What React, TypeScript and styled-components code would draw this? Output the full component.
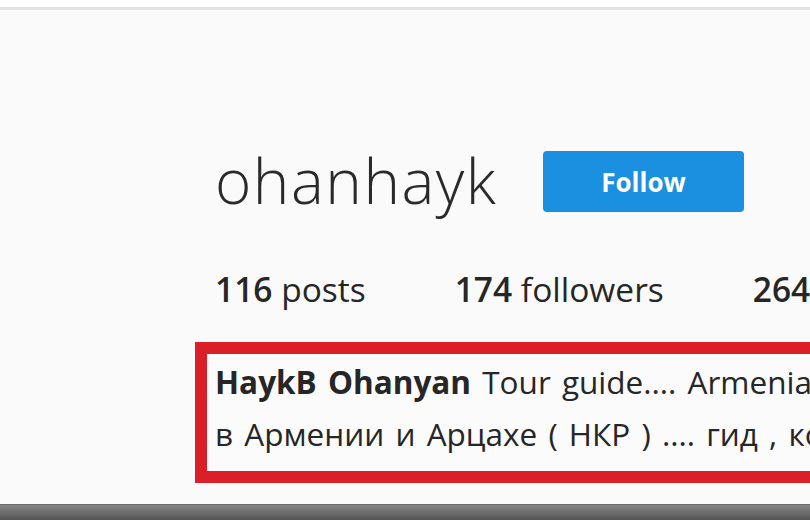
import styled, { createGlobalStyle } from 'styled-components'

const GlobalStyle = createGlobalStyle`
  html, body {
    margin: 0;
    padding: 0;
    background: #fafafa;
  }
  body {
    font-family: 'Open Sans', 'Noto Sans', 'Liberation Sans', sans-serif;
    color: #262626;
  }
`

const Page = styled.div`
  width: 810px;
  height: 520px;
  overflow: hidden;
  display: flex;
  flex-direction: column;
  background: #fafafa;
`

const TopStrip = styled.div`
  height: 7px;
  background: #ffffff;
  border-bottom: 3px solid #e2e2e2;
`

const Main = styled.main`
  flex: 1;
  display: flex;
  flex-direction: column;
  padding: 141px 0 0 215px;
  min-width: 0;
`

const Header = styled.div`
  display: flex;
  align-items: center;
  height: 61px;
`

const Username = styled.h1`
  margin: 0;
  width: 328px;
  flex-shrink: 0;
  font-family: 'Open Sans', 'Noto Sans', sans-serif;
  font-weight: 300;
  font-size: 62px;
  line-height: 61px;
  padding-bottom: 2px;
  color: #2a2a2a;
  letter-spacing: 1.5px;
  white-space: nowrap;
`

const FollowButton = styled.button`
  width: 201px;
  height: 61px;
  border: none;
  border-radius: 4px;
  background: #1b8fe0;
  color: #ffffff;
  font-family: 'Open Sans', 'Noto Sans', sans-serif;
  font-weight: 700;
  font-size: 26px;
  cursor: pointer;
  flex-shrink: 0;
`

const Stats = styled.ul`
  list-style: none;
  margin: 57px 0 0;
  padding: 0;
  display: flex;
  gap: 89px;
  height: 40px;
  align-items: center;
  white-space: nowrap;
`

const Stat = styled.li`
  font-size: 33.5px;
  line-height: 40px;
  font-weight: 400;
  color: #262626;

  b {
    font-weight: 600;
  }
`

const BioBox = styled.div`
  margin: 33px 0 0 -20px;
  width: 640px;
  height: 141px;
  box-sizing: border-box;
  border: 12px solid #da1f29;
  border-right: none;
  padding: 2px 0 0 8px;
  overflow: hidden;
  white-space: nowrap;
  background: #fbfbfb;
`

const BioLine = styled.p`
  margin: 0;
  font-size: 31.5px;
  line-height: 52px;
  word-spacing: 3px;
  color: #262626;

  b {
    font-weight: 700;
  }
`

const BottomBar = styled.div`
  height: 16px;
  background: linear-gradient(#858585, #555555);
  border-top: 1px solid #6a6a6a;
  box-sizing: border-box;
`

export default function App() {
  return (
    <>
      <GlobalStyle />
      <Page>
        <TopStrip />
        <Main>
          <Header>
            <Username>ohanhayk</Username>
            <FollowButton>Follow</FollowButton>
          </Header>
          <Stats>
            <Stat><b>116</b> posts</Stat>
            <Stat><b>174</b> followers</Stat>
            <Stat><b>264</b> following</Stat>
          </Stats>
          <BioBox>
            <BioLine><b>HaykB Ohanyan</b> Tour guide.... Armenia &amp; Artsakh</BioLine>
            <BioLine>в Армении и Арцахе ( НКР ) .... гид , консультант</BioLine>
          </BioBox>
        </Main>
        <BottomBar />
      </Page>
    </>
  )
}
